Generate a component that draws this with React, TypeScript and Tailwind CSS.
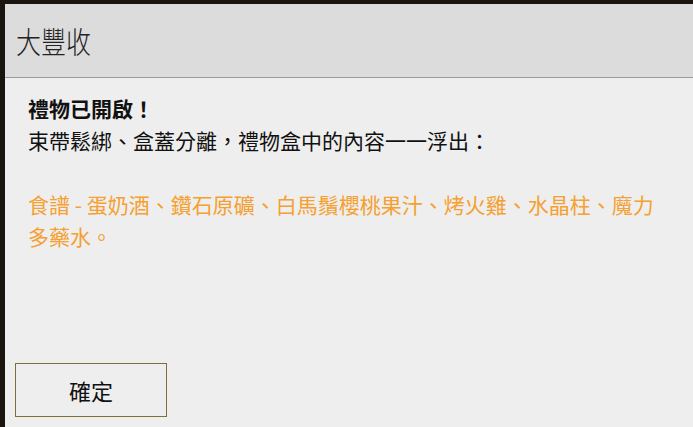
export default function App() {
  const font = { fontFamily: '"Noto Sans CJK TC", "Noto Sans CJK SC", sans-serif' };
  return (
    <div className="w-[693px] h-[427px] bg-[#1a140e] pt-[4px] pl-[5px] overflow-hidden" style={font}>
      <div className="h-full flex flex-col bg-[#eeeeee]">
        <div className="h-[74px] shrink-0 flex items-center pl-[11px] bg-[#dcdcdc] border-b border-[#9c9c9c]">
          <span className="text-[25px] leading-none text-[#222222] font-light scale-y-[1.18] origin-center">大豐收</span>
        </div>
        <div className="flex-1 flex flex-col justify-between pl-[23px] pr-[24px] pt-[14px] pb-[10px]">
          <div className="text-[21px] leading-[32px] text-[#111111]">
            <div className="font-bold">禮物已開啟！</div>
            <div>束帶鬆綁、盒蓋分離，禮物盒中的內容一一浮出：</div>
            <div className="h-[32px]" />
            <div className="text-[#f5a030]">食譜 - 蛋奶酒、鑽石原礦、白馬鬚櫻桃果汁、烤火雞、水晶柱、魔力多藥水。</div>
          </div>
          <button className="-ml-[13px] w-[152px] h-[54px] border border-[#7d6e3a] text-[22px] text-[#111111] flex items-center justify-center">
            確定
          </button>
        </div>
      </div>
    </div>
  );
}
